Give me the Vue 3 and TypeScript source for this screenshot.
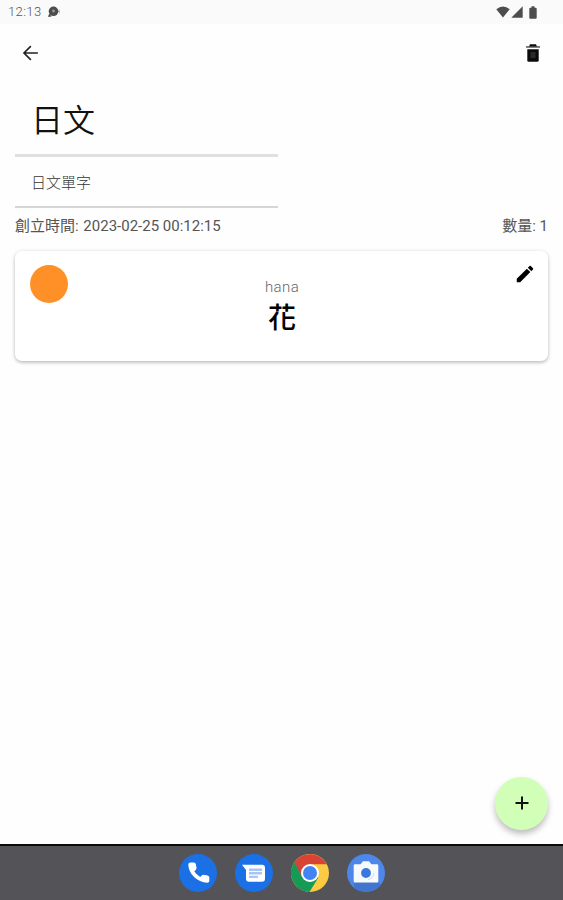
<script setup lang="ts">
import { ref } from 'vue'

interface WordCard {
  id: number
  reading: string
  word: string
}

const title = ref('日文')
const description = ref('日文單字')
const createdAt = '2023-02-25 00:12:15'
const cards = ref<WordCard[]>([{ id: 1, reading: 'hana', word: '花' }])
</script>

<template>
  <div class="screen">
    <header class="status">
      <span class="clock">12:13</span>
      <svg class="notice" viewBox="0 0 14 12">
        <circle cx="6.5" cy="5.3" r="4.8" fill="#4c4c4c" />
        <path d="M2.500 7.500.8 10.800h3.700zM9 4l3 1.200L9 7.500z" fill="#4c4c4c" />
        <circle cx="6.500" cy="5" r="1.400" fill="#999" />
        <path d="M12.300 3.500v4" stroke="#bbb" stroke-width="1" />
      </svg>
      <div class="signals">
        <svg class="wifi" viewBox="0 0 14 12"><path d="M.3 3.2Q7-2.2 13.7 3.2L7 11.6z" /></svg>
        <svg class="cell" viewBox="0 0 12 12"><path d="M11.7.3v11.4H.3z" /></svg>
        <svg class="battery" viewBox="0 0 8 13"><path d="M2.5.3h3v1.4h1.2q1 0 1 1v9q0 1-1 1H1.3q-1 0-1-1v-9q0-1 1-1h1.2z" /></svg>
      </div>
    </header>

    <nav class="toolbar">
      <svg class="back" viewBox="0 0 24 24"><path d="M20 12H5M12.4 4.5 4.9 12l7.5 7.5" /></svg>
      <svg class="trash" viewBox="0 0 24 24">
        <path d="M6.300 8.200h11.400v11q0 1.500-1.500 1.500H7.800q-1.500 0-1.500-1.500z" />
        <path class="lid" d="M5 5h14v1.900H5z" />
        <path d="M9 3.300h6l1 2.200H8z" />
        <path class="inset" d="M9.500 11h5v6h-5z" />
      </svg>
    </nav>

    <main class="content">
      <div class="field title">{{ title }}</div>
      <div class="field description">{{ description }}</div>
      <div class="meta">
        <span>創立時間: <span class="date">{{ createdAt }}</span></span>
        <span>數量: {{ cards.length }}</span>
      </div>
      <article v-for="card in cards" :key="card.id" class="card">
        <span class="dot"></span>
        <div class="entry">
          <span class="reading">{{ card.reading }}</span>
          <span class="word">{{ card.word }}</span>
        </div>
        <svg class="pencil" viewBox="0 0 24 24">
          <path d="M3 17.25V21h3.75L17.8 9.94l-3.75-3.75zM20.7 7.04a1 1 0 0 0 0-1.41l-2.34-2.34a1 1 0 0 0-1.41 0l-1.83 1.83 3.75 3.75z" />
        </svg>
      </article>
    </main>

    <button class="fab" aria-label="+">
      <svg viewBox="0 0 14 14"><path d="M7 .5v13M.5 7h13" /></svg>
    </button>

    <footer class="taskbar">
      <svg viewBox="0 0 38 38">
        <circle cx="19" cy="19" r="19" fill="#1b70e6" />
        <path d="M11.500 9.200h3.300q1 0 1.200 1l.7 3.600q.2.800-.4 1.400l-2.100 2c1.800 3.200 4 5.200 7 6.800l2.100-2q.6-.6 1.400-.4l3.700.7q1.100.2 1.100 1.200v3.300q0 1.300-1.400 1.200C18.500 27.400 10.500 19.600 10.100 10.600q0-1.400 1.400-1.400z" fill="#fff" stroke="#fff" stroke-width="1.600" stroke-linejoin="round" />
      </svg>
      <svg viewBox="0 0 38 38">
        <circle cx="19" cy="19" r="19" fill="#1b70e6" />
        <path fill="#fff" d="M7 10.800h20q3 0 3 3v11q0 3-3 3H14q-3 0-3-3V16z" />
        <path d="M14 15.700h13M14 19.300h13M14 22.900h9" stroke="#a9c5f4" stroke-width="2.400" />
      </svg>
      <svg viewBox="0 0 38 38">
        <circle cx="19" cy="19" r="19" fill="#fbcb43" />
        <path fill="#159b56" d="M3.500 8A19 19 0 0 0 18.500 38l8.700-14.250L19 19z" />
        <path fill="#d94336" d="M3.500 8A19 19 0 0 1 35.700 10.300H19L11.200 23.500z" />
        <circle cx="19" cy="19" r="9" fill="#fff" />
        <circle cx="19" cy="19" r="7" fill="#4384f3" />
      </svg>
      <svg viewBox="0 0 38 38">
        <circle cx="19" cy="19" r="19" fill="#4d87ea" />
        <path d="M6.700 28.500h24.600l3 1.800A19 19 0 0 1 7.500 34z" fill="#4275ce" />
        <path fill="#f8f9fb" d="M9 10.300h4.600L16 7.300h6l2.400 3H30q1.300 0 1.300 1.300v15.600q0 1.300-1.300 1.300H8q-1.300 0-1.300-1.300V11.600q0-1.300 1.300-1.300z" />
        <circle cx="19" cy="19" r="4.900" fill="#3979df" />
        <path d="M21 25.500q5.500-1 6-6.500" fill="none" stroke="#d5dae2" stroke-width="1" />
      </svg>
    </footer>
  </div>
</template>

<style>
body {
  margin: 0;
}
</style>

<style scoped>
.screen {
  box-sizing: border-box;
  width: 563px;
  height: 900px;
  display: flex;
  flex-direction: column;
  background: #fefefe;
  color: #111;
  font-family: Roboto, 'Noto Sans CJK TC', sans-serif;
  overflow: hidden;
}

svg {
  display: block;
  flex: none;
}

.status {
  display: flex;
  align-items: center;
  height: 24px;
  padding: 0 26px 0 8px;
  box-sizing: border-box;
  background: #fafafa;
}

.clock {
  width: 39px;
  font-size: 13px;
  line-height: 24px;
  font-weight: 300;
  letter-spacing: 0.4px;
  color: #555;
}

.notice {
  width: 14px;
  height: 12px;
}

.signals {
  display: flex;
  align-items: center;
  margin-left: auto;
  fill: #4d4d4d;
}

.wifi {
  width: 14px;
  height: 12px;
}

.cell {
  width: 12px;
  height: 12px;
  margin-left: 1px;
}

.battery {
  width: 8px;
  height: 13px;
  margin: 0 0 0 6px;
}

.toolbar {
  display: flex;
  align-items: center;
  justify-content: space-between;
  height: 58px;
  box-sizing: border-box;
  padding: 0 18px 0 19px;
}

.back {
  width: 23px;
  height: 22px;
  fill: none;
  stroke: #222;
  stroke-width: 1.8;
}

.trash {
  width: 24px;
  height: 24px;
  fill: #0b0b0b;
}

.trash .lid {
  fill: #777;
}

.trash .inset {
  fill: #2a2a2a;
}

.content {
  display: flex;
  flex-direction: column;
  padding: 0 15px;
}

.field {
  box-sizing: border-box;
  width: 263px;
}

.title {
  height: 75px;
  padding-left: 16px;
  border-bottom: 3px solid #e0e0e0;
  font-size: 32px;
  line-height: 78px;
  font-weight: 350;
}

.description {
  height: 51px;
  padding-left: 16px;
  border-bottom: 2px solid #d6d6d6;
  font-size: 15px;
  line-height: 53px;
  font-weight: 300;
  color: #333;
}

.meta {
  display: flex;
  justify-content: space-between;
  height: 43px;
  font-size: 15px;
  line-height: 37px;
  font-weight: 400;
  color: #555;
}

.date {
  margin-left: 1px;
}

.card {
  display: flex;
  justify-content: space-between;
  height: 110px;
  box-sizing: border-box;
  padding: 14px 12px 0 15px;
  border-radius: 7px;
  background: #fff;
  box-shadow: 0 1px 4px rgba(0, 0, 0, 0.2), 0 2px 3px rgba(0, 0, 0, 0.1);
}

.dot {
  width: 38px;
  height: 38px;
  border-radius: 50%;
  background: #ff9028;
}

.entry {
  display: flex;
  flex-direction: column;
  align-items: center;
  margin-left: -18px;
  padding-top: 12px;
}

.reading {
  font-size: 15px;
  line-height: 20px;
  font-weight: 300;
  letter-spacing: 0.4px;
  color: #666;
}

.word {
  font-size: 28px;
  line-height: 44px;
  font-weight: 500;
  color: #000;
}

.pencil {
  width: 22px;
  height: 22px;
  margin-top: -2px;
}

.fab {
  display: flex;
  align-items: center;
  justify-content: center;
  width: 53px;
  height: 53px;
  margin: auto 15px 14px auto;
  padding: 0 0 1px;
  box-sizing: border-box;
  border: 0;
  border-radius: 50%;
  background: #d2ffb8;
  box-shadow: 0 4px 6px rgba(0, 0, 0, 0.26);
}

.fab svg {
  width: 14px;
  height: 14px;
  stroke: #111;
  stroke-width: 2;
}

.taskbar {
  display: flex;
  justify-content: center;
  align-items: center;
  gap: 18px;
  flex: none;
  height: 56px;
  box-sizing: border-box;
  border-top: 2px solid #0b0b0b;
  background: #545357;
}

.taskbar svg {
  width: 38px;
  height: 38px;
}
</style>
